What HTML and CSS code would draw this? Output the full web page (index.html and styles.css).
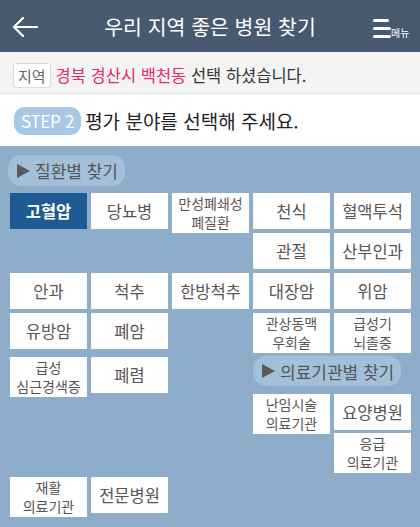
FILE: index.html
```html
<!DOCTYPE html>
<html lang="ko">
<head>
  <meta charset="UTF-8" />
  <title>우리 지역 좋은 병원 찾기</title>
  <meta name="viewport" content="width=device-width, initial-scale=1.0"/>
  <link rel="stylesheet" href="styles.css">
</head>
<body>

<div class="topbar">
  <a class="back">
    <svg width="26" height="22" viewBox="0 0 26 22"><path d="M25 11H2M11 2L2 11L11 20" fill="none" stroke="#fff" stroke-width="2.2" stroke-linecap="round" stroke-linejoin="round"/></svg>
  </a>
  <h1>우리 지역 좋은 병원 찾기</h1>
  <a class="menu">
    <svg width="18" height="19" viewBox="0 0 18 19"><rect x="0" y="0" width="16" height="3" rx="1.5" fill="#fff"/><rect x="0" y="8" width="18" height="3" rx="1.5" fill="#fff"/><rect x="0" y="16" width="18" height="3" rx="1.5" fill="#fff"/></svg>
    <span>메뉴</span>
  </a>
</div>

<div class="region">
  <span class="tag">지역</span>
  <p><em>경북 경산시 백천동</em> 선택 하셨습니다.</p>
</div>

<div class="step">
  <span class="step-no">STEP 2</span>
  <p>평가 분야를 선택해 주세요.</p>
</div>

<div class="content">
  <div class="pill"><i></i>질환별 찾기</div>

  <div class="grid">
    <a class="btn on">고혈압</a>
    <a class="btn">당뇨병</a>
    <a class="btn two">만성폐쇄성<br>폐질환</a>
    <a class="btn">천식</a>
    <a class="btn">혈액투석</a>
    <a class="btn col4">관절</a>
    <a class="btn">산부인과</a>
    <a class="btn">안과</a>
    <a class="btn">척추</a>
    <a class="btn">한방척추</a>
    <a class="btn">대장암</a>
    <a class="btn">위암</a>
    <a class="btn">유방암</a>
    <a class="btn">폐암</a>
    <a class="btn two col4">관상동맥<br>우회술</a>
    <a class="btn two">급성기<br>뇌졸중</a>
    <a class="btn two">급성<br>심근경색증</a>
    <a class="btn">폐렴</a>
    <div class="pill col4 wide"><i></i>의료기관별 찾기</div>
    <a class="btn two col4">난임시술<br>의료기관</a>
    <a class="btn">요양병원</a>
    <a class="btn two col5">응급<br>의료기관</a>
    <a class="btn two">재활<br>의료기관</a>
    <a class="btn">전문병원</a>
  </div>
</div>

</body>
</html>
```

FILE: styles.css
```css
* {
  margin: 0;
  padding: 0;
  box-sizing: border-box;
  font-family: "Noto Sans CJK KR", sans-serif;
}

body {
  width: 420px;
  min-height: 527px;
  background: #8dadcb;
}

.topbar {
  height: 52px;
  background: #48596f;
  display: grid;
  grid-template-columns: 60px 1fr 60px;
  align-items: center;
  color: #fff;
}

.back {
  display: flex;
  padding-left: 12px;
  margin-top: 1px;
}

.topbar h1 {
  font-size: 20.5px;
  font-weight: normal;
  text-align: center;
  line-height: 24px;
}

.menu {
  display: flex;
  align-items: flex-end;
  padding-left: 13px;
  margin-top: 5px;
}

.menu span {
  font-size: 10px;
  line-height: 12px;
  margin-bottom: -1px;
}

.region {
  display: flex;
  align-items: center;
  height: 42px;
  padding: 5px 13px 0;
  background: #f4f4f4;
  border-bottom: 1px solid #e6e6e6;
}

.tag {
  height: 25px;
  line-height: 23px;
  padding: 0 4px;
  border: 1px solid #dcdcdc;
  border-radius: 3px;
  background: #fff;
  font-size: 15px;
  color: #666;
}

.region p {
  margin-left: 5px;
  font-size: 16.5px;
  color: #333;
}

.region em {
  font-style: normal;
  color: #e4266f;
}

.step {
  display: flex;
  align-items: center;
  height: 52px;
  padding: 1px 14px 0;
  background: #fff;
}

.step-no {
  height: 28px;
  line-height: 28px;
  padding: 0 7px;
  border-radius: 11px;
  background: #a8c8e6;
  color: #fff;
  font-size: 17px;
  letter-spacing: -0.3px;
}

.step p {
  margin-left: 4px;
  font-size: 19px;
  color: #222;
}

.content {
  padding: 9px 0 0 8px;
}

.pill {
  display: inline-flex;
  align-items: center;
  height: 31px;
  padding: 0 7px 0 9px;
  border-radius: 13px;
  background: #a3c0da;
  color: #555;
  font-size: 17px;
}

.pill i {
  width: 0;
  height: 0;
  border-left: 13px solid #5a5a5a;
  border-top: 7.5px solid transparent;
  border-bottom: 7.5px solid transparent;
  margin-right: 5px;
}

.grid {
  display: grid;
  grid-template-columns: repeat(5, 77px);
  grid-template-rows: 40px 40px 40px 44px 37px 39px 44px 40px;
  column-gap: 4px;
  margin: 7px 0 0 2px;
}

.btn {
  display: flex;
  align-items: center;
  justify-content: center;
  height: 36px;
  align-self: start;
  background: #fff;
  color: #555;
  font-size: 16.5px;
  text-align: center;
}

.btn.two {
  height: 40px;
  font-size: 14px;
  line-height: 19px;
}

.btn.on {
  background: #1e5b94;
  color: #fff;
  font-weight: bold;
}

.col4 {
  grid-column-start: 4;
}

.col5 {
  grid-column-start: 5;
}

.pill.wide {
  grid-column: 4 / span 2;
  justify-self: start;
  align-self: start;
  height: 30px;
  margin-top: -1px;
}
```
